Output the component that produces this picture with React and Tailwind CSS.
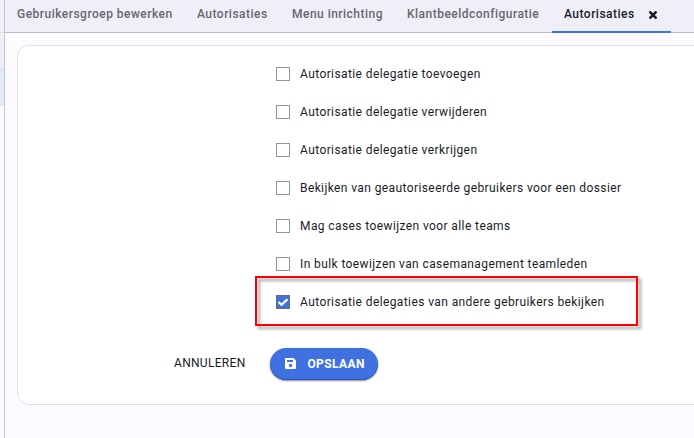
import clsx from 'clsx';

const tabs = [
  { label: 'Gebruikersgroep bewerken', width: 'w-[180px]' },
  { label: 'Autorisaties', width: 'w-[95px]' },
  { label: 'Menu inrichting', width: 'w-[115px]' },
  { label: 'Klantbeeldconfiguratie', width: 'w-[157px]' },
  { label: 'Autorisaties', width: 'w-[119px]', active: true },
];

const permissions = [
  { label: 'Autorisatie delegatie toevoegen' },
  { label: 'Autorisatie delegatie verwijderen' },
  { label: 'Autorisatie delegatie verkrijgen' },
  { label: 'Bekijken van geautoriseerde gebruikers voor een dossier' },
  { label: 'Mag cases toewijzen voor alle teams' },
  { label: 'In bulk toewijzen van casemanagement teamleden' },
  { label: 'Autorisatie delegaties van andere gebruikers bekijken', checked: true, highlighted: true },
];

function Tab({ label, width, active }) {
  return (
    <button
      className={clsx(
        'flex h-[33px] shrink-0 items-center pl-3 text-[12px] font-medium tracking-[0.48px] whitespace-nowrap',
        width,
        active ? 'border-b-2 border-[#4171e1] pb-[3px] text-[#1b1b1f]' : 'pb-[5px] text-[#68676c]'
      )}
    >
      {label}
      {active && (
        <svg width="8" height="8" viewBox="0 0 8 8" className="mt-px ml-[14.5px]" stroke="currentColor" strokeWidth="2.5">
          <path d="M0.5 0.5l7 7M7.5 0.5l-7 7" />
        </svg>
      )}
    </button>
  );
}

function Permission({ label, checked, highlighted }) {
  return (
    <label className="relative flex h-[38px] items-center text-[12px] tracking-[0.4px] whitespace-nowrap text-[#1b1b1f]">
      {highlighted && (
        <span className="absolute -top-[7px] -left-[21px] h-[50px] w-[383px] border-2 border-[#fe0000] drop-shadow-[3px_3px_1.5px_rgba(0,0,0,0.4)]" />
      )}
      <span
        className={clsx(
          'mr-[10px] flex h-[14px] w-[14px] items-center justify-center border',
          checked ? 'border-[#6b6b70] bg-[#4171e1]' : 'border-[#949494] bg-white'
        )}
      >
        {checked && (
          <svg width="12" height="12" viewBox="0 0 12 12" fill="none" stroke="white" strokeWidth="2.2">
            <path d="M1.5 6l3 2.8 6-5.6" />
          </svg>
        )}
      </span>
      {label}
    </label>
  );
}

export default function App() {
  return (
    <div className="flex h-[438px] w-full overflow-hidden bg-[#fdfbff] font-['Roboto',sans-serif]">
      {/* Edge of the side menu */}
      <div className="w-1 shrink-0">
        <div className="h-[33px] border-b border-[#dddde9] bg-[#efeffa]" />
        <div className="h-9 border-b border-[#dddde9] bg-[#efeffa]" />
        <div className="h-[37px] bg-[#e0eafa]" />
      </div>

      <div className="min-w-0 flex-1 border-l border-[#c3c4d5]">
        <div className="flex h-[33px] border-b border-[#b9bccd] bg-[#efeffa]">
          {tabs.map((tab, i) => (
            <Tab key={i} {...tab} />
          ))}
        </div>

        <div className="mt-3 ml-3 h-[360px] w-[720px] rounded-xl border border-[#dfdfeb] bg-white pt-[9px]">
          <div className="ml-[258px]">
            {permissions.map((permission) => (
              <Permission key={permission.label} {...permission} />
            ))}
          </div>

          <div className="mt-[27px] flex h-8 items-center">
            <button className="ml-[156px] h-8 w-24 pb-[2px] text-left text-[12px] tracking-[0.3px] text-[#1b1b1f]">
              ANNULEREN
            </button>
            <button className="flex h-8 w-[108px] items-center rounded-full bg-[#4171e1] pl-[15px] text-[12px] font-bold tracking-[0.4px] text-white shadow-[inset_0_-1px_0_#2456c5,0_1px_2px_rgba(0,0,0,0.45)]">
              <svg width="11" height="11" viewBox="0 0 11 11" fill="currentColor" fillRule="evenodd" className="mr-[11.4px] mb-px">
                <path d="M1 0h7.5L11 2.5V10a1 1 0 0 1-1 1H1a1 1 0 0 1-1-1V1a1 1 0 0 1 1-1zM2 2v2h6V2zM5.5 5.7a1.7 1.7 0 1 0 0 3.4a1.7 1.7 0 0 0 0-3.4z" />
              </svg>
              OPSLAAN
            </button>
          </div>
        </div>
      </div>
    </div>
  );
}
